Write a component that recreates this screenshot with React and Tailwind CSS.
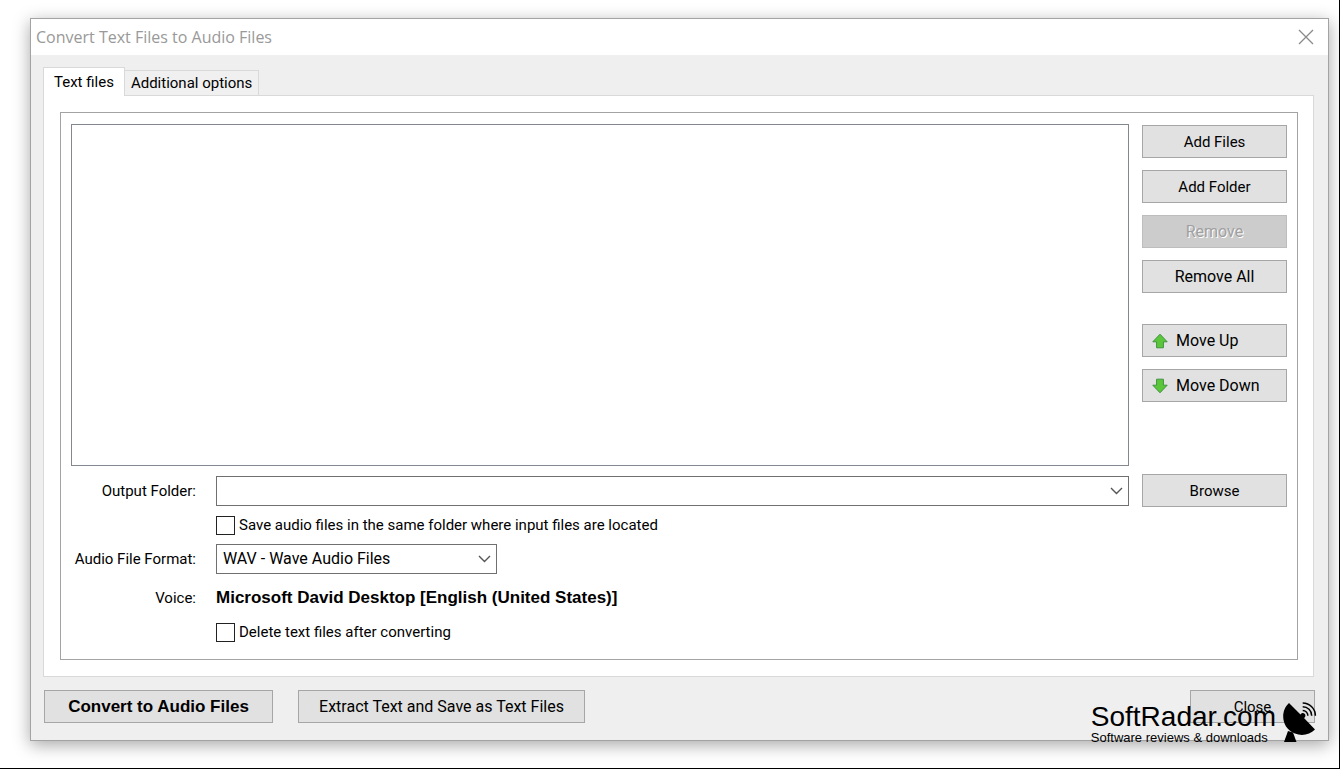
import React, { useState } from 'react'
import clsx from 'clsx'

const ArrowIcon = ({ down }) => (
  <svg width="16" height="16" viewBox="0 0 16 16" className={clsx('shrink-0', down && 'rotate-180')}>
    <path d="M8 1.2 L15.2 8.8 H11.4 V14.8 H4.6 V8.8 H0.8 Z" fill="#5cc63a" stroke="#3f9340" strokeWidth="1" strokeLinejoin="round" />
  </svg>
)

const Chevron = () => (
  <svg width="13" height="8" viewBox="0 0 13 8" className="pointer-events-none absolute right-[6px] top-[11px]">
    <path d="M1 1 L6.5 6.5 L12 1" fill="none" stroke="#555" strokeWidth="1.4" />
  </svg>
)

const Button = ({ children, className, ...props }) => (
  <button
    type="button"
    className={clsx(
      'h-[33px] border border-[#a6a6a6] bg-[#e1e1e1] text-black disabled:border-[#bdbdbd] disabled:bg-[#cccccc] disabled:text-[#a0a0a0] disabled:[text-shadow:1px_1px_0_#fff]',
      className
    )}
    {...props}
  >
    {children}
  </button>
)

const CheckOption = ({ id, children, checked, onChange }) => (
  <div className="flex items-center gap-1">
    <input
      id={id}
      type="checkbox"
      checked={checked}
      onChange={onChange}
      className="size-[19px] appearance-none border border-[#222] bg-white checked:bg-[#444]"
    />
    <label htmlFor={id}>{children}</label>
  </div>
)

const Watermark = () => (
  <div className="pointer-events-none absolute bottom-[24px] right-[22px] flex items-end gap-[7px] text-black">
    <div className="font-['Liberation_Sans',sans-serif]">
      <p className="text-[28px] leading-[28px]">SoftRadar.com</p>
      <p className="text-[13px] leading-[13px]">Software reviews &amp; downloads</p>
    </div>
    <svg width="34" height="42" viewBox="0 0 34 42">
      <path d="M6 1 L17.5 12.5 A2.6 2.6 0 1 1 21 16 L32 27.5 C27 32.5 19 34.5 12 31.5 C3 28 -0.500 20 0.300 12 C0.800 7.500 3 3.500 6 1 Z" fill="#000" />
      <path d="M5 29 L10 30.500 L13.500 40 H1 Z" fill="#000" />
      <path d="M19.700 8.500 A5.200 5.200 0 0 1 24.900 13.700 M19.700 4.700 A9 9 0 0 1 28.700 13.700 M19.700 1 A12.700 12.700 0 0 1 32.400 13.700" fill="none" stroke="#000" strokeWidth="1.500" />
    </svg>
  </div>
)

const App = () => {
  const [folder, setFolder] = useState('')
  const [format, setFormat] = useState('wav')
  const [sameFolder, setSameFolder] = useState(false)
  const [deleteAfter, setDeleteAfter] = useState(false)

  return (
    <div className="relative flex min-h-screen flex-col border-b border-r border-black bg-white pb-[27px] pl-[30px] pr-[10px] pt-[18px] font-['Roboto',sans-serif] text-[15px] leading-[20px] text-black">
      <div className="flex grow flex-col border border-[#a3a3a3] bg-[#efefef] shadow-[0_4px_16px_rgba(0,0,0,0.35)]">
        <header className="flex h-[36px] items-center justify-between bg-white pl-[5px] pr-[14px]">
          <h1 className="font-['Open_Sans',sans-serif] text-[16px] text-[#999]">Convert Text Files to Audio Files</h1>
          <button type="button" aria-label="Close window">
            <svg width="16" height="16" viewBox="0 0 16 16">
              <path d="M1 1 L15 15 M15 1 L1 15" stroke="#8a8a8a" strokeWidth="1.3" />
            </svg>
          </button>
        </header>

        <main className="flex grow flex-col px-3 pt-3">
          <div role="tablist" className="flex items-end pr-4">
            <button type="button" role="tab" aria-selected="true" className="relative -mb-px h-[29px] border border-b-0 border-[#d9d9d9] bg-white px-[10px]">
              Text files
            </button>
            <button type="button" role="tab" aria-selected="false" className="h-[25px] border border-b-0 border-l-0 border-[#d9d9d9] bg-[#f0f0f0] px-[6px]">
              Additional options
            </button>
          </div>

          <div className="mr-[2px] flex grow flex-col border border-[#d9d9d9] bg-white py-4 pl-4 pr-[15px]">
            <div className="flex grow gap-[13px] border border-[#a3a3a3] px-[10px] pt-[11px]">
              <div className="flex grow flex-col">
                <div role="listbox" aria-label="Text files" className="h-[342px] border border-[#828790] bg-white"></div>

                <div className="mt-[10px] grid grid-cols-[125px_1fr] items-center gap-x-5 gap-y-[9px]">
                  <label htmlFor="folder" className="whitespace-nowrap text-right">Output Folder:</label>
                  <div className="relative">
                    <select id="folder" value={folder} onChange={(e) => setFolder(e.target.value)} className="block h-[30px] w-full appearance-none border border-[#707070] bg-white px-[6px]">
                      <option value=""></option>
                    </select>
                    <Chevron />
                  </div>

                  <div className="col-start-2">
                    <CheckOption id="same-folder" checked={sameFolder} onChange={(e) => setSameFolder(e.target.checked)}>
                      Save audio files in the same folder where input files are located
                    </CheckOption>
                  </div>

                  <label htmlFor="format" className="whitespace-nowrap text-right">Audio File Format:</label>
                  <div className="relative w-[281px]">
                    <select id="format" value={format} onChange={(e) => setFormat(e.target.value)} className="block h-[30px] w-full appearance-none border border-[#707070] bg-white px-[6px] text-[16px]">
                      <option value="wav">WAV - Wave Audio Files</option>
                    </select>
                    <Chevron />
                  </div>

                  <span className="text-right leading-[30px]">Voice:</span>
                  <strong className="font-['Liberation_Sans',sans-serif] text-[17px] font-bold leading-[30px]">
                    Microsoft David Desktop [English (United States)]
                  </strong>

                  <div className="col-start-2">
                    <CheckOption id="delete-after" checked={deleteAfter} onChange={(e) => setDeleteAfter(e.target.checked)}>
                      Delete text files after converting
                    </CheckOption>
                  </div>
                </div>
              </div>

              <div className="flex w-[145px] shrink-0 flex-col gap-3 pt-px">
                <Button>Add Files</Button>
                <Button>Add Folder</Button>
                <Button className="text-[16px]" disabled>Remove</Button>
                <Button className="text-[16px]">Remove All</Button>
                <Button className="mt-[19px] flex items-center gap-2 px-[9px] text-[16px]">
                  <ArrowIcon />
                  Move Up
                </Button>
                <Button className="flex items-center gap-2 px-[9px] text-[16px]">
                  <ArrowIcon down />
                  Move Down
                </Button>
                <Button className="mt-[60px]">Browse</Button>
              </div>
            </div>
          </div>
        </main>

        <footer className="flex items-center gap-[25px] px-[13px] pb-[17px] pt-[13px]">
          <Button className="w-[229px] font-['Liberation_Sans',sans-serif] text-[17px] font-bold">Convert to Audio Files</Button>
          <Button className="w-[287px] text-[16px]">Extract Text and Save as Text Files</Button>
          <Button className="ml-auto w-[125px]">Close</Button>
        </footer>
      </div>

      <Watermark />
    </div>
  )
}

export default App
